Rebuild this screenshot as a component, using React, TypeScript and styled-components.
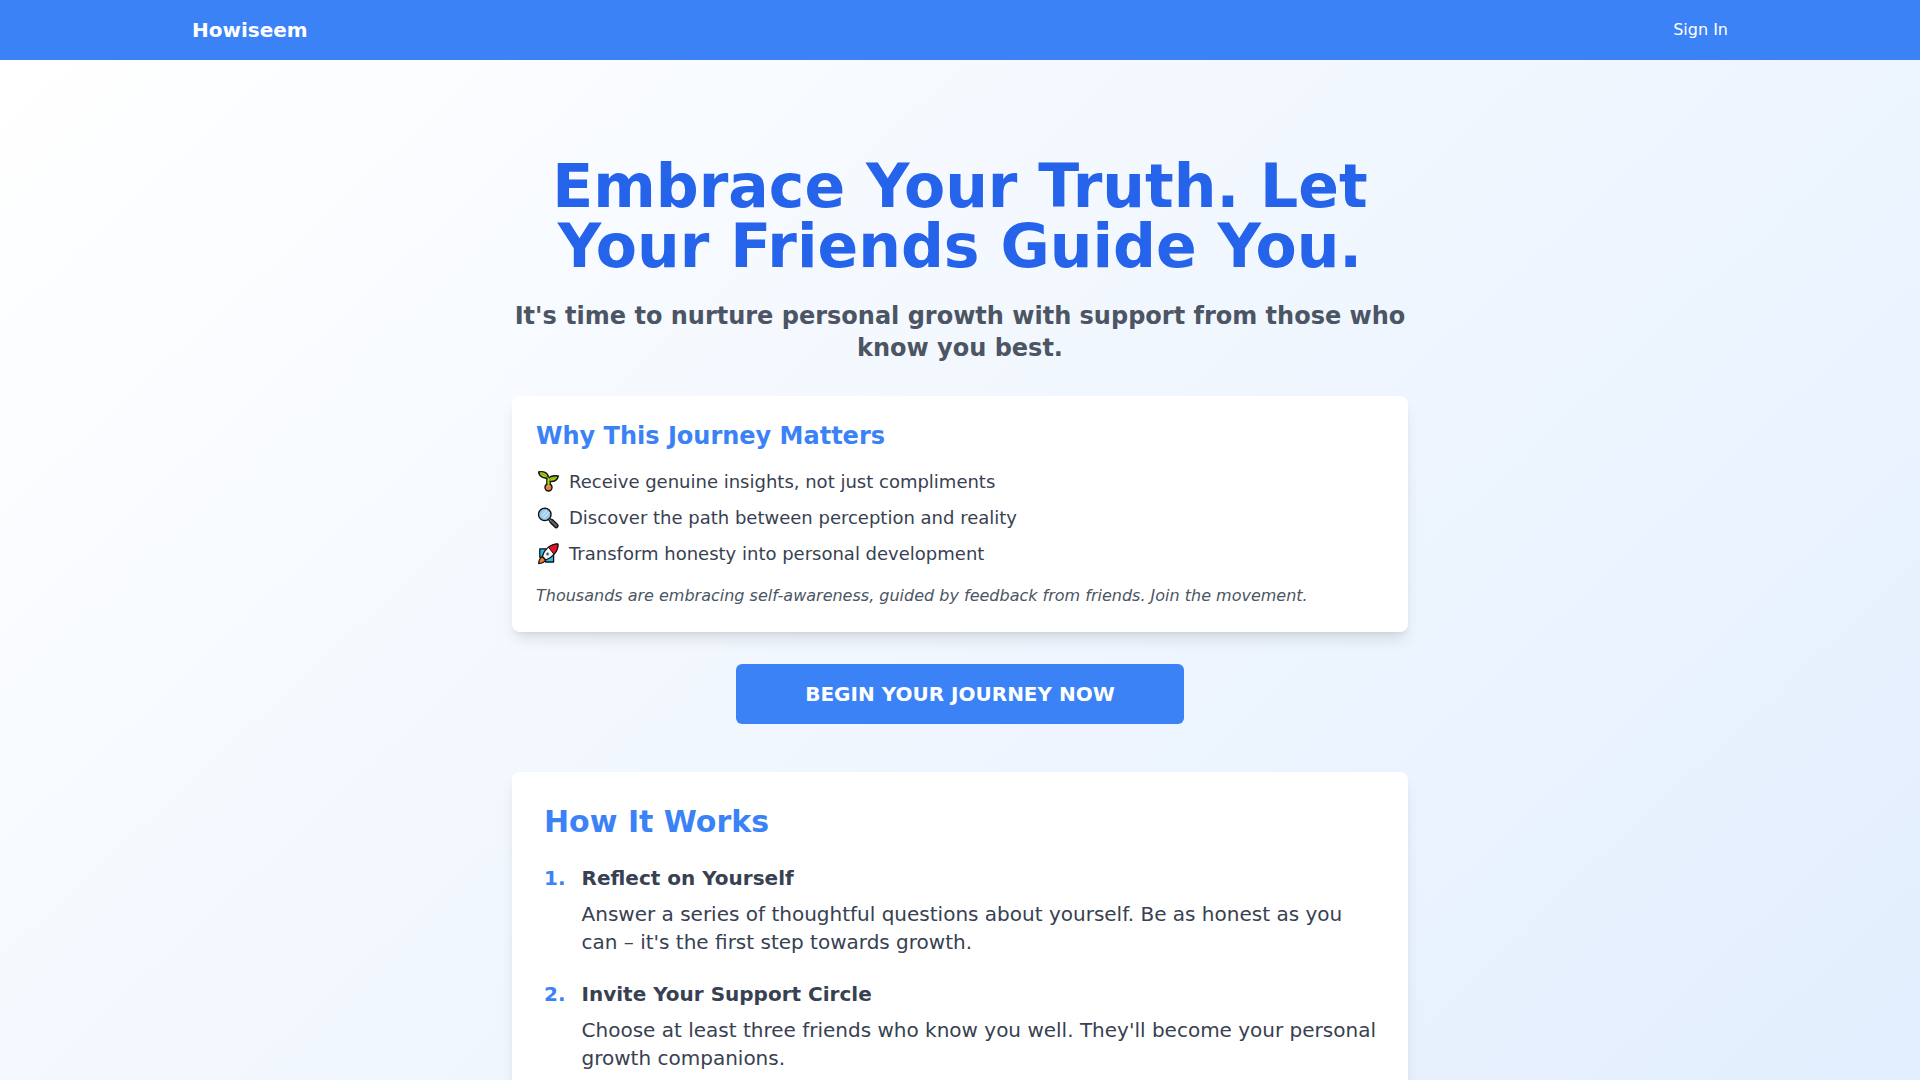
import React from "react";
import styled, { createGlobalStyle } from "styled-components";

const GlobalStyle = createGlobalStyle`
  *, *::before, *::after { box-sizing: border-box; }
  body {
    margin: 0;
    font-family: "DejaVu Sans", sans-serif;
    font-size: 16px;
    line-height: 24px;
    color: #374151;
  }
  h1, h2, h3, p, ul, ol { margin: 0; padding: 0; }
  ul, ol { list-style: none; }
`;

const Backdrop = styled.div`
  min-height: 165vh;
  background: linear-gradient(to bottom right, #ffffff, #dbeafe);
`;

const NavBar = styled.header`
  padding: 16px;
  background: #3b82f6;
  color: #ffffff;
`;

const NavInner = styled.nav`
  display: flex;
  align-items: center;
  justify-content: space-between;
  max-width: 1536px;
  margin: 0 auto;
`;

const Brand = styled.a`
  font-size: 20px;
  line-height: 28px;
  font-weight: 700;
  color: inherit;
  text-decoration: none;
`;

const NavLink = styled.a`
  color: inherit;
  text-decoration: none;
`;

const Main = styled.main`
  max-width: 928px;
  margin: 0 auto;
  padding: 96px 16px;
`;

const Hero = styled.section`
  display: flex;
  flex-direction: column;
  align-items: center;
`;

const Title = styled.h1`
  font-size: 60px;
  line-height: 60px;
  font-weight: 700;
  text-align: center;
  color: #2563eb;
`;

const Subtitle = styled.p`
  margin-top: 24px;
  font-size: 24px;
  line-height: 32px;
  font-weight: 600;
  text-align: center;
  color: #4b5563;
`;

const Card = styled.section<{ $roomy?: boolean }>`
  width: 100%;
  margin-top: ${(p) => (p.$roomy ? 48 : 32)}px;
  padding: ${(p) => (p.$roomy ? 32 : 24)}px;
  border-radius: 8px;
  background: #ffffff;
  box-shadow: 0 10px 15px -3px rgba(0, 0, 0, 0.1), 0 4px 6px -4px rgba(0, 0, 0, 0.1);
`;

const CardTitle = styled.h2<{ $large?: boolean }>`
  margin-bottom: ${(p) => (p.$large ? 24 : 16)}px;
  font-size: ${(p) => (p.$large ? 30 : 24)}px;
  line-height: ${(p) => (p.$large ? 36 : 32)}px;
  font-weight: 700;
  color: #3b82f6;
`;

const Reasons = styled.ul`
  display: grid;
  gap: 8px;
  font-size: 18px;
  line-height: 28px;
`;

const Reason = styled.li`
  display: flex;
  align-items: center;
  gap: 8px;
`;

const Glyph = styled.svg`
  width: 25px;
  height: 24px;
  flex: none;
`;

const Note = styled.p`
  margin-top: 16px;
  font-style: italic;
  color: #4b5563;
`;

const CallToAction = styled.button`
  width: 50%;
  margin-top: 32px;
  padding: 16px 32px;
  border: 0;
  border-radius: 6px;
  background: #3b82f6;
  color: #ffffff;
  font: 700 20px/28px "DejaVu Sans", sans-serif;
  text-transform: uppercase;
  cursor: pointer;
`;

const Steps = styled.ol`
  display: grid;
  gap: 24px;
  font-size: 20px;
  line-height: 28px;
`;

const Step = styled.li`
  display: flex;
  gap: 16px;
`;

const StepNumber = styled.span`
  font-weight: 700;
  color: #3b82f6;
`;

const StepTitle = styled.h3`
  margin-bottom: 8px;
  font-size: 20px;
  line-height: 28px;
  font-weight: 600;
`;

const Seedling = () => (
  <Glyph viewBox="0 0 25 24" aria-hidden="true" stroke="#111" strokeWidth="1.4" strokeLinejoin="round" strokeLinecap="round">
    <path d="M10.900 9v4.500c0 1-.9 1.500-1.500 2.400h6.200c-.6-.9-1.500-1.400-1.500-2.400V9z" fill="#b1cc33" />
    <circle cx="12.500" cy="17.500" r="3.500" fill="#ee7f45" />
    <path d="M12.300 9.200C11 7.600 8.500 8.300 6.200 7.200 4 6.100 2.900 4 2.600 1.900c4.500-.8 9.200 0 10 5.700z" fill="#a8d60c" />
    <path d="M12.500 9.200C13.300 6.300 17 5.400 22.300 6c-.8 3.800-4 6.200-9.700 5.400z" fill="#a8d60c" />
    <path d="M12.500 8.500v7" stroke="#a8d60c" strokeWidth="1.900" />
    <path d="M5.500 3.900c2.300.3 4.200 1.300 5.300 3M19.200 7.500c-2 .1-3.800.7-5 1.900" fill="none" stroke="#5c9e31" strokeWidth="0.900" />
  </Glyph>
);

const Magnifier = () => (
  <Glyph viewBox="0 0 25 24" aria-hidden="true" stroke="#111" strokeLinecap="round" strokeLinejoin="round">
    <path d="M13 12.900l2.500 2.500" strokeWidth="3.200" fill="none" />
    <path d="M15.800 15.400l4.400 4.400" strokeWidth="5" fill="none" />
    <path d="M13 12.900l2.200 2.200" stroke="#9b9b9a" strokeWidth="1.200" fill="none" />
    <path d="M15.900 15.500l4.200 4.200" stroke="#5b6166" strokeWidth="2.400" fill="none" />
    <circle cx="8.800" cy="8.400" r="6.200" fill="#92d3f5" stroke="#111" strokeWidth="1.500" />
    <circle cx="8.800" cy="8.400" r="5.100" fill="#9accf2" stroke="#8aa9c0" strokeWidth="0.600" />
    <path d="M5.700 9.800l4.700-5M7.700 11.800l5-5.300" stroke="#c6e5fa" strokeWidth="1.200" fill="none" />
  </Glyph>
);

const Rocket = () => (
  <Glyph viewBox="0 0 25 24" aria-hidden="true" stroke="#111" strokeWidth="1.300" strokeLinejoin="round">
    <path d="M10 6.800H3.800v8.400l3 1zM17.600 12.500v7.500H9.500l-1-3z" fill="#25c0f2" />
    <path d="M6.600 14.500C4.200 15.500 2.900 18.500 2.700 21.500c3 0 5.800-1.500 7.100-3.800z" fill="#f1802c" />
    <path d="M6.300 14.500C7.800 8.500 13 2.300 21.900 2 22.600 9.200 16 16 9.800 18z" fill="#f7f9fa" />
    <path d="M12.600 5.300C15.300 3.200 18.500 2.100 21.900 2c.3 3.900-1.400 7.500-4 10.200z" fill="#e8112c" strokeWidth="1" />
    <circle cx="11.600" cy="12" r="1.300" fill="#333" stroke="#9aa0a4" strokeWidth="0.900" />
  </Glyph>
);

const reasons = [
  { icon: <Seedling />, text: "Receive genuine insights, not just compliments" },
  { icon: <Magnifier />, text: "Discover the path between perception and reality" },
  { icon: <Rocket />, text: "Transform honesty into personal development" },
];

const steps = [
  {
    title: "Reflect on Yourself",
    body: "Answer a series of thoughtful questions about yourself. Be as honest as you can – it's the first step towards growth.",
  },
  {
    title: "Invite Your Support Circle",
    body: "Choose at least three friends who know you well. They'll become your personal growth companions.",
  },
];

export default function App() {
  return (
    <>
      <GlobalStyle />
      <NavBar>
        <NavInner>
          <Brand href="#home">Howiseem</Brand>
          <NavLink href="#sign-in">Sign In</NavLink>
        </NavInner>
      </NavBar>
      <Backdrop>
        <Main>
          <Hero>
            <Title>Embrace Your Truth. Let Your Friends Guide You.</Title>
            <Subtitle>
              It's time to nurture personal growth with support from those who know you best.
            </Subtitle>
            <Card>
              <CardTitle>Why This Journey Matters</CardTitle>
              <Reasons>
                {reasons.map((reason) => (
                  <Reason key={reason.text}>
                    {reason.icon}
                    {reason.text}
                  </Reason>
                ))}
              </Reasons>
              <Note>
                Thousands are embracing self-awareness, guided by feedback from friends. Join the
                movement.
              </Note>
            </Card>
            <CallToAction type="button">Begin your journey now</CallToAction>
          </Hero>
          <Card $roomy>
            <CardTitle $large>How It Works</CardTitle>
            <Steps>
              {steps.map((step, index) => (
                <Step key={step.title}>
                  <StepNumber>{index + 1}.</StepNumber>
                  <div>
                    <StepTitle>{step.title}</StepTitle>
                    <p>{step.body}</p>
                  </div>
                </Step>
              ))}
            </Steps>
          </Card>
        </Main>
      </Backdrop>
    </>
  );
}
